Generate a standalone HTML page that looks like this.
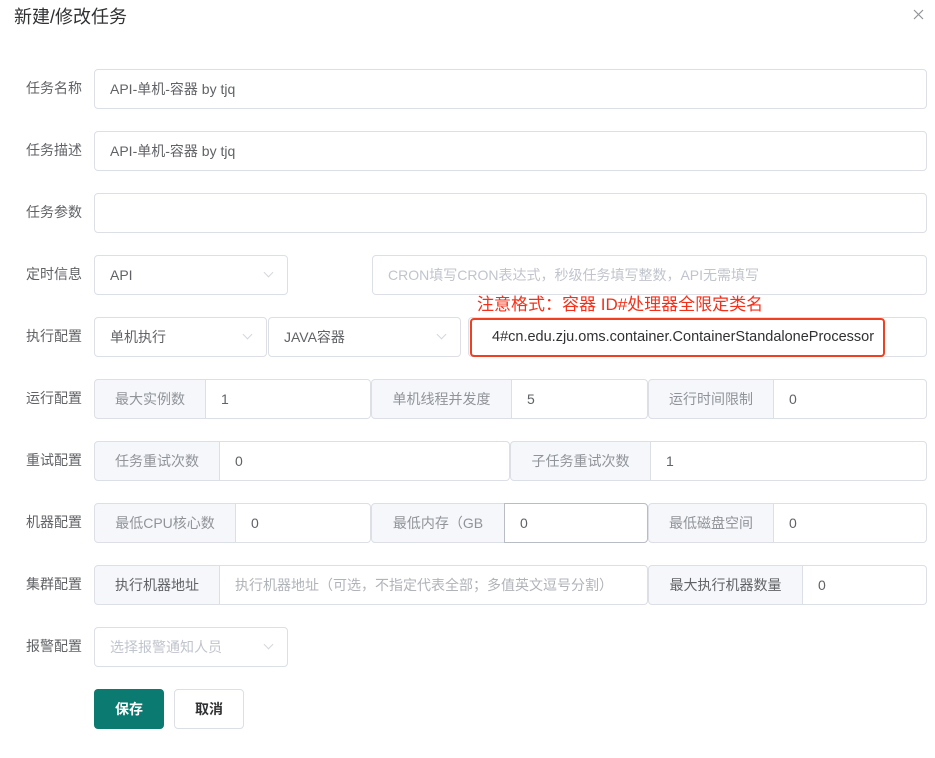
<!DOCTYPE html>
<html><head><meta charset="utf-8"><style>
*{box-sizing:border-box;margin:0;padding:0}
body{width:935px;height:758px;background:#fff;font-family:"Liberation Sans","Noto Sans CJK SC",sans-serif;color:#303133;position:relative;overflow:hidden;font-size:14px}
.a{position:absolute}
.lbl{position:absolute;left:26px;font-size:14px;color:#606266;line-height:20px}
.in{position:absolute;height:40px;border:1px solid #dcdfe6;border-radius:4px;background:#fff;padding-left:15px;line-height:38px;font-size:14px;color:#606266;white-space:nowrap;overflow:hidden}
.ph{color:#c0c4cc}
.pre{position:absolute;height:40px;border:1px solid #dcdfe6;border-radius:4px 0 0 4px;background:#f5f7fa;color:#909399;text-align:center;line-height:38px;font-size:14px}
.suf{position:absolute;height:40px;border:1px solid #dcdfe6;border-left:none;border-radius:0 4px 4px 0;background:#fff;padding-left:15px;line-height:38px;color:#606266}
.arr{position:absolute;right:15px;top:13px;width:7px;height:7px;border-right:1px solid #d4d7de;border-bottom:1px solid #d4d7de;transform:rotate(45deg)}
</style></head><body>
<div class="a" style="left:14px;top:5px;font-size:18px;color:#303133;line-height:24px">新建/修改任务</div>
<svg class="a" style="left:913px;top:9px" width="11" height="11"><path d="M1 1L10 10M10 1L1 10" stroke="#909399" stroke-width="1.2"/></svg>

<div class="lbl" style="top:78px">任务名称</div>
<div class="in" style="left:94px;top:69px;width:833px;color:#606266">API-单机-容器 by tjq</div>
<div class="lbl" style="top:140px">任务描述</div>
<div class="in" style="left:94px;top:131px;width:833px">API-单机-容器 by tjq</div>
<div class="lbl" style="top:202px">任务参数</div>
<div class="in" style="left:94px;top:193px;width:833px"></div>

<div class="lbl" style="top:264px">定时信息</div>
<div class="in" style="left:94px;top:255px;width:194px">API<span class="arr"></span></div>
<div class="in ph" style="left:372px;top:255px;width:555px">CRON填写CRON表达式，秒级任务填写整数，API无需填写</div>

<div class="a" style="left:477px;top:294px;font-size:17px;color:#f5301a;line-height:22px">注意格式：容器 ID#处理器全限定类名</div>
<div class="lbl" style="top:326px">执行配置</div>
<div class="in" style="left:94px;top:317px;width:173px">单机执行<span class="arr"></span></div>
<div class="in" style="left:268px;top:317px;width:193px">JAVA容器<span class="arr"></span></div>
<div class="in" style="left:468px;top:317px;width:459px"></div>
<div class="a" style="left:470px;top:318px;width:415px;height:39px;border:2px solid #f0401f;border-radius:4px;padding-left:20px;line-height:35px;color:#303133;font-size:14.5px;white-space:nowrap">4#cn.edu.zju.oms.container.ContainerStandaloneProcessor</div>

<div class="lbl" style="top:388px">运行配置</div>
<div class="pre" style="left:94px;top:379px;width:112px">最大实例数</div><div class="suf" style="left:206px;top:379px;width:165px">1</div>
<div class="pre" style="left:371px;top:379px;width:141px">单机线程并发度</div><div class="suf" style="left:512px;top:379px;width:136px">5</div>
<div class="pre" style="left:648px;top:379px;width:126px">运行时间限制</div><div class="suf" style="left:774px;top:379px;width:153px">0</div>

<div class="lbl" style="top:450px">重试配置</div>
<div class="pre" style="left:94px;top:441px;width:126px">任务重试次数</div><div class="suf" style="left:220px;top:441px;width:290px">0</div>
<div class="pre" style="left:510px;top:441px;width:141px">子任务重试次数</div><div class="suf" style="left:651px;top:441px;width:276px">1</div>

<div class="lbl" style="top:512px">机器配置</div>
<div class="pre" style="left:94px;top:503px;width:142px">最低CPU核心数</div><div class="suf" style="left:236px;top:503px;width:135px">0</div>
<div class="pre" style="left:371px;top:503px;width:134px">最低内存（GB</div><div class="suf" style="left:504px;top:503px;width:144px;border:1px solid #b8bcc4;border-radius:0 4px 4px 0">0</div>
<div class="pre" style="left:648px;top:503px;width:126px">最低磁盘空间</div><div class="suf" style="left:774px;top:503px;width:153px">0</div>

<div class="lbl" style="top:574px">集群配置</div>
<div class="pre" style="left:94px;top:565px;width:126px;color:#606266">执行机器地址</div><div class="suf ph" style="left:220px;top:565px;width:428px;color:#b0b3b8">执行机器地址（可选，不指定代表全部；多值英文逗号分割）</div>
<div class="pre" style="left:648px;top:565px;width:155px;color:#606266">最大执行机器数量</div><div class="suf" style="left:803px;top:565px;width:124px">0</div>

<div class="lbl" style="top:636px">报警配置</div>
<div class="in ph" style="left:94px;top:627px;width:194px">选择报警通知人员<span class="arr"></span></div>

<div class="a" style="left:94px;top:689px;width:70px;height:40px;background:#0b7a70;border-radius:4px;color:#fff;text-align:center;line-height:40px;font-weight:bold">保存</div>
<div class="a" style="left:174px;top:689px;width:70px;height:40px;border:1px solid #dcdfe6;border-radius:4px;color:#303133;text-align:center;line-height:38px;font-weight:bold">取消</div>
</body></html>
